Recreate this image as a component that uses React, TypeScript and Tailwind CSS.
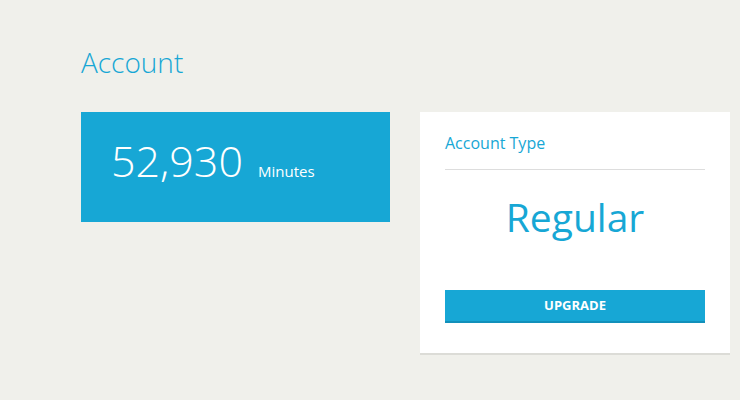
import React from "react";

export default function App() {
  return (
    <div
      className="min-h-[400px] w-[740px] bg-[#f0f0eb] pl-[81px] pt-[44px]"
      style={{ fontFamily: '"Open Sans", sans-serif' }}
    >
      {/* Page title */}
      <h1 className="text-[28px] font-light leading-[36px] text-[#17a7d5]">Account</h1>

      <div className="mt-[32px] flex items-start gap-[30px]">
        {/* Minutes box */}
        <div className="h-[110px] w-[309px] bg-[#17a7d5] pl-[30px] pt-[27px] text-white">
          <div className="flex items-baseline gap-[15px]">
            <span className="text-[43px] font-light leading-[43px]">52,930</span>
            <span className="text-[15px] leading-[20px]">Minutes</span>
          </div>
        </div>

        {/* Account type card */}
        <div className="w-[310px] border-b-2 border-[#dcdcd7] bg-white px-[25px] pt-[19px] pb-[30px]">
          <div className="border-b border-[#dddddd] pb-[14px] text-[16px] leading-[24px] text-[#17a7d5]">
            Account Type
          </div>
          <div className="mt-[23px] text-center text-[39px] leading-[48px] text-[#17a7d5]">Regular</div>
          <button className="mt-[49px] block h-[33px] w-full border-b-2 border-[#1290ba] bg-[#17a7d5] text-[13px] font-bold text-white">
            UPGRADE
          </button>
        </div>
      </div>
    </div>
  );
}
